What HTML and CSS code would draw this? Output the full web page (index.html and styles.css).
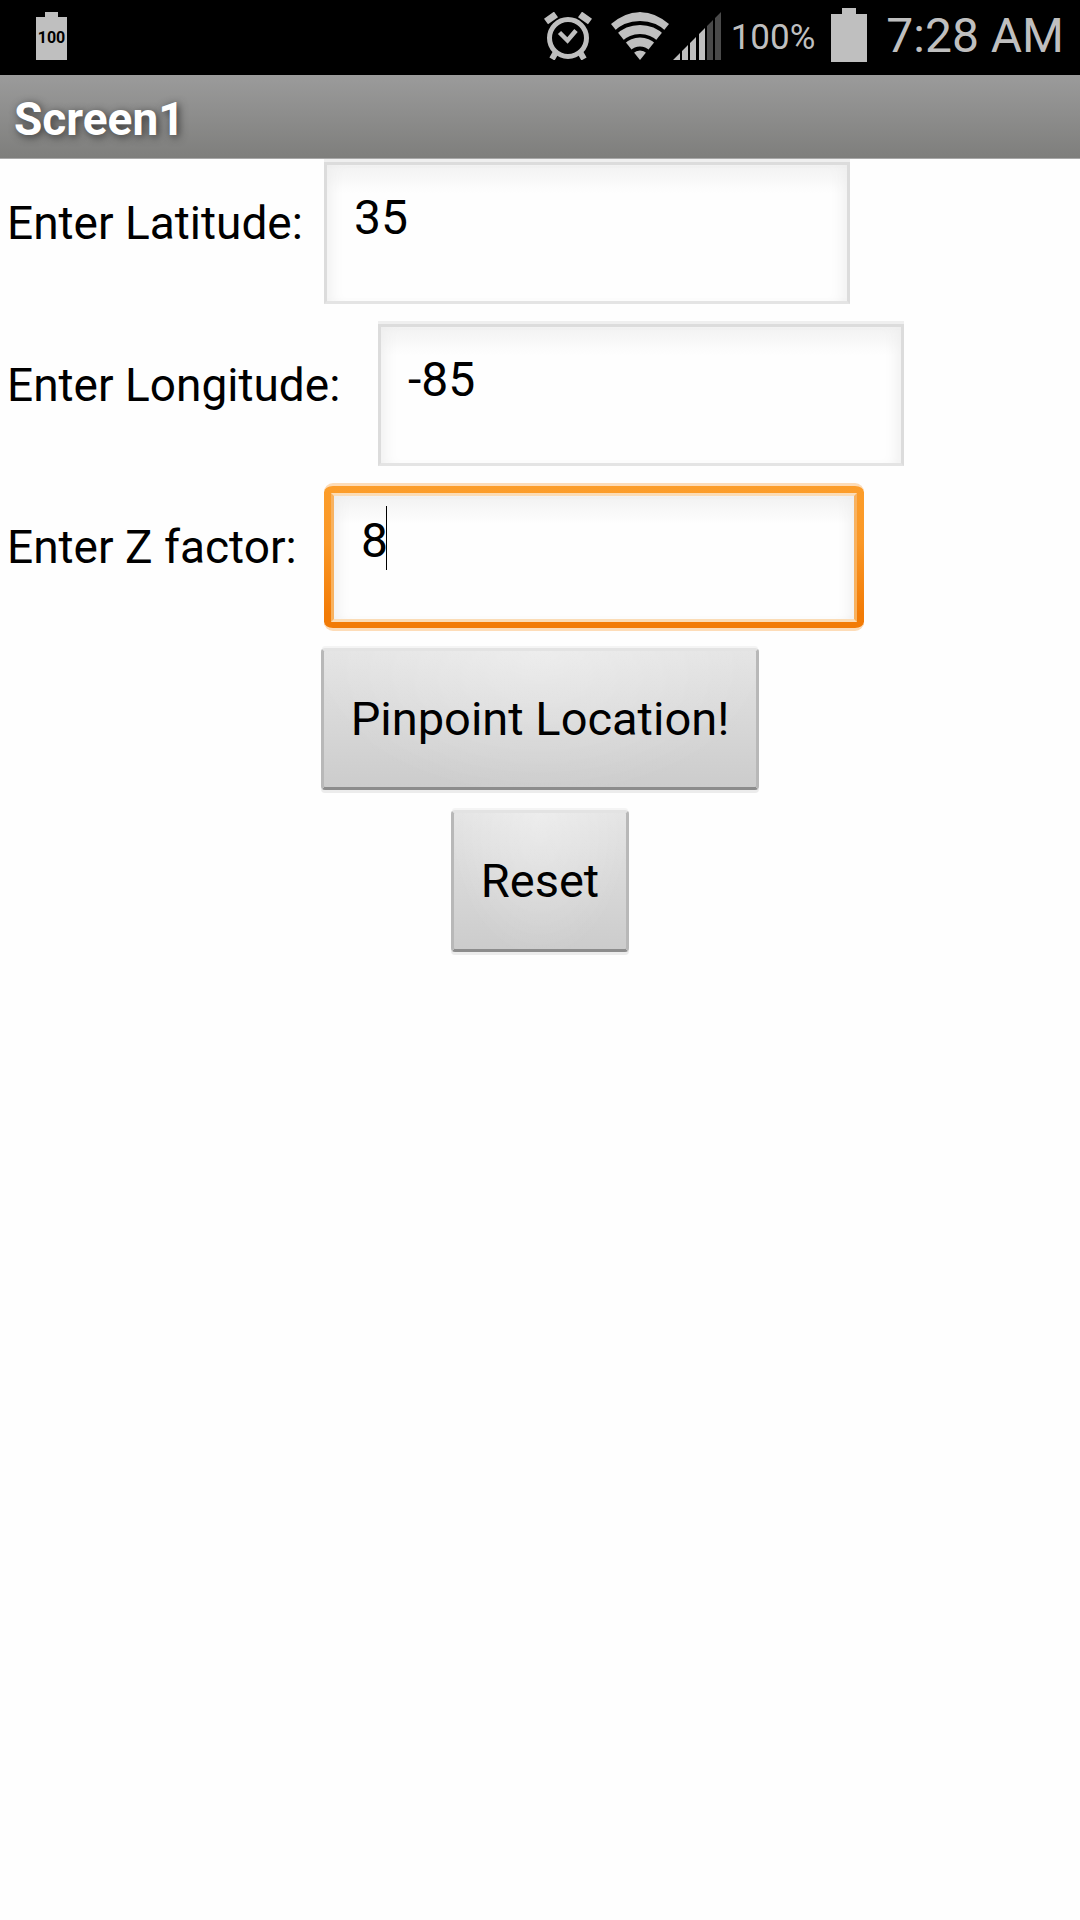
FILE: index.html
```html
<!DOCTYPE html>
<html lang="en">
<head>
<meta charset="utf-8">
<meta name="viewport" content="width=device-width, initial-scale=1">
<title>Screen1</title>
<link rel="stylesheet" href="styles.css">
</head>
<body>
<div class="status">
  <div class="mini-battery">100</div>
  <div class="status-icons">
    <svg class="alarm" width="48" height="48" viewBox="0 0 48 48" fill="none" stroke="#bfbfbf" aria-hidden="true">
      <circle cx="24" cy="26" r="18.5" stroke-width="5"/>
      <path d="M15.5 20.5L23.5 28.5L32 18.5" stroke-width="4.5"/>
      <path d="M2 9.500L12 2.500M46 9.500L36 2.500" stroke-width="7"/>
      <path d="M12 40L8 47M36 40L40 47" stroke-width="6"/>
    </svg>
    <svg class="wifi" width="58" height="48" viewBox="0 0 58 48" fill="none" stroke="#bfbfbf" aria-hidden="true">
      <clipPath id="fan"><path d="M0 12Q29 -12 58 12L29 48Z"/></clipPath>
      <g clip-path="url(#fan)">
        <circle cx="29" cy="48" r="43.5" stroke-width="9"/>
        <circle cx="29" cy="48" r="30.5" stroke-width="9"/>
        <circle cx="29" cy="48" r="18" stroke-width="9"/>
        <circle cx="29" cy="48" r="9.5" fill="#bfbfbf" stroke="none"/>
      </g>
    </svg>
    <svg class="signal" width="48" height="48" viewBox="0 0 48 48" aria-hidden="true">
      <path fill="#bfbfbf" d="M0 48L7 41V48ZM9 39L15 33V48H9ZM17 31L23 25V48H17ZM26 22L32 16V48H26Z"/>
      <path fill="#4a4a4a" d="M34 14L40 8V48H34ZM42 6L48 0V48H42Z"/>
    </svg>
    <span class="percent">100%</span>
    <svg class="battery" width="36" height="54" viewBox="0 0 36 54" aria-hidden="true">
      <path fill="#bfbfbf" d="M11 0H25V6H36V54H0V6H11Z"/>
    </svg>
    <span class="clock">7:28 AM</span>
  </div>
</div>
<header class="title-bar"><h1>Screen1</h1></header>
<main>
  <form class="form">
    <div class="row">
      <label for="lat">Enter Latitude:</label>
      <input class="field" id="lat" type="text" value="35">
    </div>
    <div class="row">
      <label class="wide" for="lon">Enter Longitude:</label>
      <input class="field" id="lon" type="text" value="-85">
    </div>
    <div class="row">
      <label for="zf">Enter Z factor:</label>
      <div class="active">
        <input class="field" id="zf" type="text" value="8">
        <span class="caret"></span>
      </div>
    </div>
    <div class="row center"><button type="button">Pinpoint Location!</button></div>
    <div class="row center"><button type="reset">Reset</button></div>
  </form>
</main>
</body>
</html>
```

FILE: styles.css
```css
* {
  box-sizing: border-box;
}

body {
  margin: 0;
  background: #fefefe;
  color: #000;
  font-family: Roboto, "Liberation Sans", sans-serif;
  font-size: 46px;
}

.status {
  display: flex;
  justify-content: space-between;
  align-items: flex-start;
  height: 75px;
  padding: 0 16px 0 36px;
  background: #000;
  color: #bfbfbf;
}

.mini-battery {
  width: 31px;
  height: 48px;
  margin-top: 12px;
  padding-top: 16px;
  background: #bfbfbf;
  clip-path: polygon(0 5px, 9px 5px, 9px 0, 22px 0, 22px 5px, 100% 5px, 100% 100%, 0 100%);
  color: #000;
  font-size: 16px;
  font-weight: 700;
  line-height: 20px;
  text-align: center;
}

.status-icons {
  display: flex;
  align-items: flex-start;
}

.alarm,
.wifi,
.signal {
  margin-top: 12px;
}

.alarm {
  margin-right: 19px;
}

.wifi {
  margin-right: 4px;
}

.signal {
  margin-right: 10px;
}

.percent {
  padding-top: 17px;
  font-size: 35px;
  line-height: 42px;
}

.battery {
  margin: 8px 19px 0 16px;
}

.clock {
  padding-top: 8px;
  font-size: 48px;
  line-height: 56px;
}

.title-bar {
  height: 84px;
  padding: 16px 14px 0;
  border-bottom: 1px solid #a8a8a8;
  background: linear-gradient(#9b9b9b, #7e7e7c);
}

h1 {
  margin: 0;
  color: #fff;
  font-size: 46px;
  line-height: 56px;
  text-shadow: 2px 2px 8px #333;
}

.row {
  display: flex;
  height: 162px;
}

.center {
  justify-content: center;
}

label {
  width: 324px;
  padding: 36px 0 0 7px;
  line-height: 56px;
  white-space: nowrap;
}

.wide {
  width: 378px;
}

.field {
  width: 526px;
  height: 142px;
  margin-top: 3px;
  padding: 24px 30px 56px 27px;
  border: 3px solid #dcdcdc;
  border-bottom-color: #e4e4e4;
  border-radius: 0;
  outline: 0;
  background: linear-gradient(#f2f2f2, #fefefe 28px);
  background-clip: padding-box;
  box-shadow: 0 -3px 0 #efefef, inset 12px 0 16px -10px #ececec, inset -12px 0 16px -10px #ececec;
  color: #000;
  font: inherit;
  font-size: 48px;
  line-height: 56px;
}

.active {
  position: relative;
  width: 540px;
  height: 148px;
  padding: 7px 7px 6px;
  border: 3px solid #fddcb8;
  border-width: 3px 0;
  border-radius: 9px;
  background: linear-gradient(#fc9d2a, #fa9827 40%, #f27b06 90%);
}

.active .field {
  width: 100%;
  height: 100%;
  margin: 0;
  padding: 16px 24px 51px 27px;
  border-color: #fbdcb6 #f8b260;
  box-shadow: inset 12px 0 16px -10px #ececec, inset -12px 0 16px -10px #ececec;
}

.caret {
  position: absolute;
  left: 62px;
  top: 20px;
  width: 1px;
  height: 64px;
  background: #000;
}

button {
  height: 142px;
  margin-top: 3px;
  padding: 0 27px;
  border: 3px solid;
  border-color: #e3e3e3 #b8b8b8 #8c8c8c;
  border-radius: 4px;
  background: radial-gradient(ellipse at top, #ffffff55, #ffffff00 75%), linear-gradient(#e4e4e4, #cccccc);
  box-shadow: 0 -3px 0 -1px #f4f4f4, 0 3px 0 #ececec;
  color: #000;
  font: inherit;
  font-size: 47px;
  line-height: 56px;
}
```
